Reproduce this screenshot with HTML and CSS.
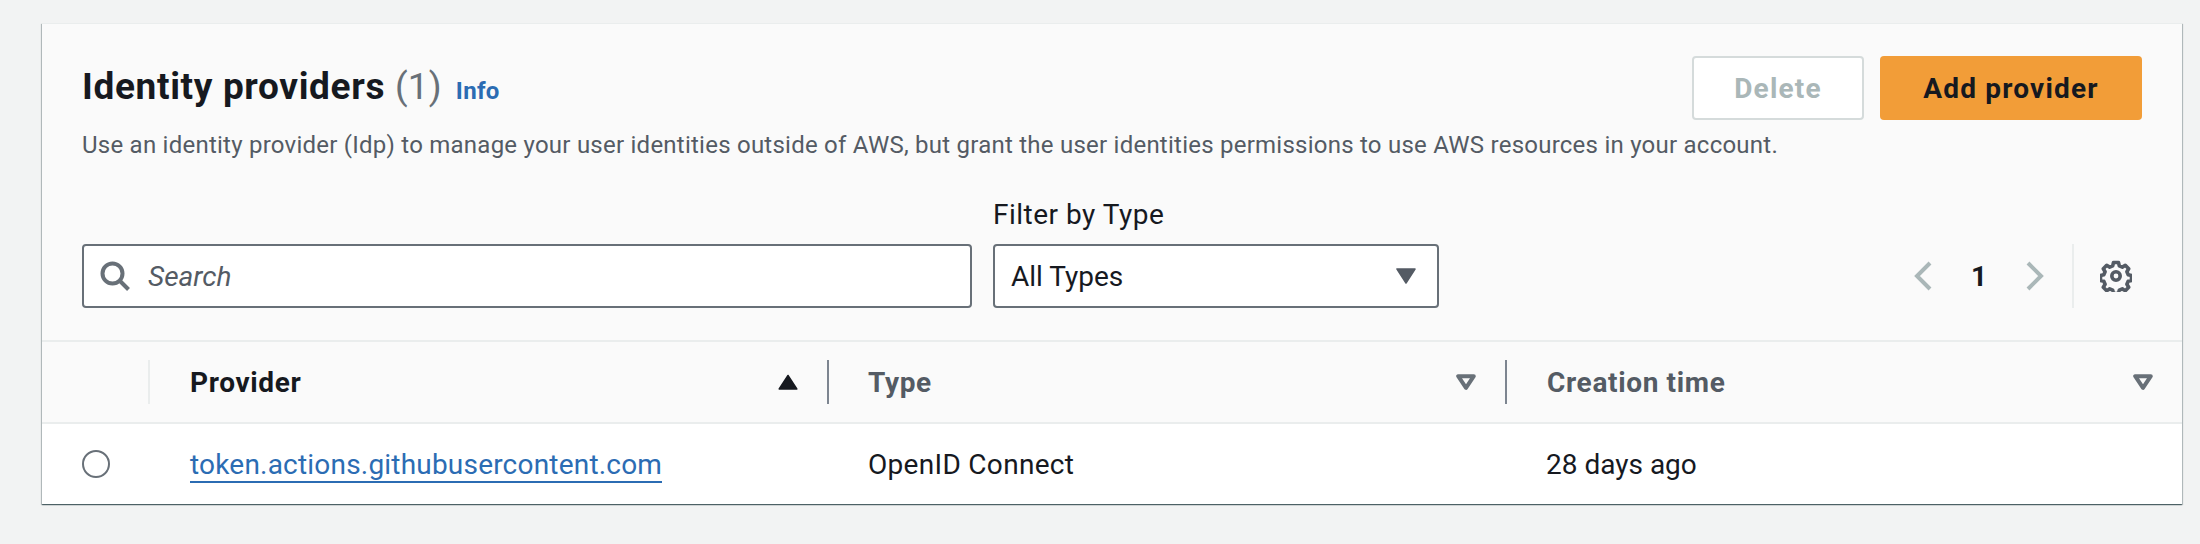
FILE: index.html
```html
<!DOCTYPE html>
<html lang="en">
<head>
<meta charset="utf-8">
<title>Identity providers</title>
<link rel="stylesheet" href="styles.css">
</head>
<body>
<section class="card">
  <header class="head">
    <div class="title-row">
      <div class="title-block">
        <h2 class="title">Identity providers <span class="count">(1)</span><a class="info">Info</a></h2>
        <p class="desc">Use an identity provider (Idp) to manage your user identities outside of AWS, but grant the user identities permissions to use AWS resources in your account.</p>
      </div>
      <div class="actions">
        <button class="btn btn-disabled">Delete</button>
        <button class="btn btn-primary">Add provider</button>
      </div>
    </div>
    <div class="tools">
      <div class="search">
        <svg class="search-icon" viewBox="0 0 30 30" width="30" height="30"><circle cx="12.500" cy="12.500" r="10" fill="none" stroke="#687078" stroke-width="4"/><path d="M19.500 19.500l9 9" stroke="#687078" stroke-width="4" fill="none"/></svg>
        <span class="placeholder">Search</span>
      </div>
      <div class="filter">
        <label class="filter-label">Filter by Type</label>
        <div class="select"><span>All Types</span><svg viewBox="0 0 20 16" width="20" height="16"><path d="M1 1h18L10 15z" fill="#545b64" stroke="#545b64" stroke-linejoin="round" stroke-width="1.500"/></svg></div>
      </div>
      <div class="pager">
        <svg viewBox="0 0 18 30" width="18" height="30"><path d="M16 2L3 15l13 13" fill="none" stroke="#aab7b8" stroke-width="4"/></svg>
        <span class="page-num">1</span>
        <svg viewBox="0 0 18 30" width="18" height="30"><path d="M2 2l13 13L2 28" fill="none" stroke="#aab7b8" stroke-width="4"/></svg>
        <div class="gear-wrap">
          <svg viewBox="0 0 32 32" width="32" height="32"><path d="M13.500 2.500h5l.8 3.300 3 1.300 3-1.800 3.400 3.400-1.800 3 1.300 3 3.300.8v5l-3.300.8-1.300 3 1.800 3-3.400 3.400-3-1.800-3 1.300-.8 3.300h-5l-.8-3.300-3-1.300-3 1.800-3.400-3.400 1.800-3-1.300-3-3.300-.8v-5l3.300-.8 1.300-3-1.800-3 3.400-3.400 3 1.800 3-1.300z" fill="none" stroke="#545b64" stroke-width="3.600" stroke-linejoin="round"/><circle cx="16" cy="16" r="4.200" fill="none" stroke="#545b64" stroke-width="3.600"/></svg>
        </div>
      </div>
    </div>
  </header>
  <div class="thead">
    <div class="th th-select"></div>
    <div class="th th-sorted"><span>Provider</span><svg viewBox="0 0 20 16" width="20" height="16"><path d="M10 1.500l8.800 13.500H1.200z" fill="#16191f" stroke="#16191f" stroke-linejoin="round" stroke-width="1.500"/></svg></div>
    <div class="th"><span>Type</span><svg viewBox="0 0 20 16" width="20" height="16"><path d="M2.200 2.200h15.600L10 13.800z" fill="none" stroke="#687078" stroke-width="4" stroke-linejoin="round"/></svg></div>
    <div class="th"><span>Creation time</span><svg viewBox="0 0 20 16" width="20" height="16"><path d="M2.200 2.200h15.600L10 13.800z" fill="none" stroke="#687078" stroke-width="4" stroke-linejoin="round"/></svg></div>
  </div>
  <div class="row">
    <div class="cell cell-select"><span class="radio"></span></div>
    <div class="cell"><a class="link">token.actions.githubusercontent.com</a></div>
    <div class="cell cell-wide">OpenID Connect</div>
    <div class="cell">28 days ago</div>
  </div>
</section>
</body>
</html>
```
FILE: styles.css
```css
* { box-sizing: border-box; }
html, body { margin: 0; }
body {
  height: 544px;
  overflow: hidden;
  background: #f2f3f3;
  padding: 23px 18px 0 42px;
  font-family: Roboto, sans-serif;
  color: #16191f;
}
.card {
  height: 481px;
  background: #fafafa;
  box-shadow: 0 1px 1px 0 rgba(0,28,36,.5), 1px 1px 1px 0 rgba(0,28,36,.2), -1px 1px 1px 0 rgba(0,28,36,.2);
  border-top: 1px solid #eaeded;
}
.head {
  height: 318px;
  padding: 32px 40px 0;
  border-bottom: 2px solid #eaeded;
}
.title-row { display: flex; justify-content: space-between; height: 152px; }
.title-block { flex: 1; min-width: 0; white-space: nowrap; }
.title {
  margin: 7px 0 0;
  font-size: 37px;
  line-height: 48px;
  font-weight: 700;
  letter-spacing: .65px;
}
.count { font-weight: 400; color: #687078; letter-spacing: .2px; }
.info { margin-left: 14px; font-size: 24px; font-weight: 700; color: #2b6cb3; letter-spacing: .3px; }
.desc { margin: 14px 0 0; font-size: 24px; line-height: 32px; color: #545b64; letter-spacing: .24px; }
.actions { display: flex; flex-shrink: 0; gap: 16px; }
.btn {
  height: 64px;
  border-radius: 4px;
  font: 700 28px Roboto, sans-serif;
  letter-spacing: 1.2px;
}
.btn-disabled { width: 172px; background: #fff; border: 2px solid #d5dbdb; color: #aab7b8; }
.btn-primary { width: 262px; background: #f29d38; border: none; color: #16191f; }
.tools { display: flex; align-items: flex-end; height: 100px; }
.search {
  width: 890px;
  height: 64px;
  display: flex;
  align-items: center;
  gap: 18px;
  padding-left: 16px;
  background: #fff;
  border: 2px solid #687078;
  border-radius: 4px;
}
.placeholder { font-size: 28px; font-style: italic; color: #545b64; }
.filter { margin-left: 21px; width: 446px; }
.filter-label { display: block; font-size: 28px; line-height: 32px; margin-bottom: 13px; letter-spacing: .5px; }
.select {
  height: 64px;
  display: flex;
  align-items: center;
  justify-content: space-between;
  padding: 0 21px 0 16px;
  background: #fff;
  border: 2px solid #687078;
  border-radius: 4px;
  font-size: 28px;
}
.pager { margin-left: auto; margin-right: 10px; height: 64px; display: flex; align-items: center; }
.page-num { width: 94px; text-align: center; font-size: 28px; font-weight: 700; }
.gear-wrap {
  margin-left: 28px;
  height: 64px;
  padding-left: 26px;
  border-left: 2px solid #eaeded;
  display: flex;
  align-items: center;
}
.thead { display: grid; grid-template-columns: 107px 678px 678px 1fr; height: 82px; border-bottom: 2px solid #eaeded; align-items: center; }
.th {
  height: 44px;
  display: flex;
  align-items: center;
  justify-content: space-between;
  padding: 0 29px 0 40px;
  border-left: 2px solid #7d8590;
  font-size: 28px;
  font-weight: 700;
  color: #545b64;
  letter-spacing: .65px;
}
.th-select { border-left: none; border-right: 2px solid #eaeded; width: 108px; }
.th:nth-child(2) { border-left: none; padding-left: 41px; }
.th:nth-child(3) { padding-left: 39px; }
.th-sorted { color: #16191f; }
.row { display: grid; grid-template-columns: 107px 678px 678px 1fr; height: 80px; background: #fff; align-items: center; }
.cell { padding-left: 41px; font-size: 28px; }
.cell-wide { letter-spacing: .3px; }
.cell-select { padding-left: 40px; display: flex; }
.radio { width: 28px; height: 28px; border: 2px solid #687078; border-radius: 50%; background: #fff; }
.link { color: #2b6cb3; border-bottom: 2px solid #2b6cb3; letter-spacing: .2px; }
```
